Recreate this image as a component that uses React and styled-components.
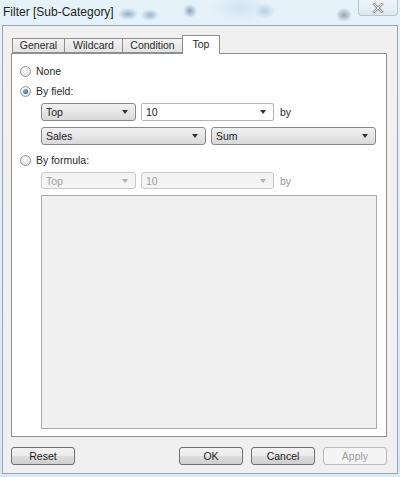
import styled, { createGlobalStyle } from "styled-components"

const Global = createGlobalStyle`
  html, body { margin: 0; padding: 0; }
  body {
    width: 400px;
    height: 477px;
    overflow: hidden;
    font-family: "Liberation Sans", Arial, sans-serif;
    color: #1e1e1e;
  }
`

const Frame = styled.div`
  width: 400px;
  height: 477px;
  box-sizing: border-box;
  display: flex;
  flex-direction: column;
  padding: 0 2px 3px 2px;
  background:
    radial-gradient(ellipse 10px 6px at 128px 14px, rgba(95,130,170,0.6), transparent),
    radial-gradient(ellipse 9px 6px at 150px 15px, rgba(95,130,170,0.55), transparent),
    radial-gradient(ellipse 7px 7px at 190px 11px, rgba(80,110,140,0.6), transparent),
    radial-gradient(ellipse 10px 8px at 265px 11px, rgba(140,175,205,0.5), transparent),
    radial-gradient(ellipse 8px 7px at 344px 15px, rgba(100,115,130,0.65), transparent),
    radial-gradient(ellipse 30px 14px at 240px 8px, rgba(190,215,232,0.5), transparent),
    linear-gradient(#e6f2f9, #d8e9f4);
`

const TitleBar = styled.div`
  height: 25px;
  display: flex;
  align-items: flex-start;
  justify-content: space-between;
  padding-left: 1px;
`

const Title = styled.div`
  font-size: 12px;
  line-height: 24px;
  color: #222;
`

const CloseButton = styled.div`
  width: 40px;
  height: 16px;
  box-sizing: border-box;
  border: 1px solid #b9c6d2;
  border-top: none;
  border-radius: 0 0 4px 4px;
  background: linear-gradient(#eef5fa, #dce9f2);
  display: flex;
  align-items: center;
  justify-content: center;
`

const Body = styled.div`
  flex: 1;
  display: flex;
  flex-direction: column;
  background: #f0f0f0;
  border: 1px solid #98a6b3;
  padding: 9px 9px 8px 8px;
`

const TabStrip = styled.div`
  display: flex;
  align-items: flex-end;
  padding-left: 1px;
  height: 18px;
  position: relative;
  z-index: 1;
`

const Tab = styled.div`
  width: ${p => p.$w}px;
  box-sizing: border-box;
  height: ${p => (p.$active ? 19 : 15)}px;
  margin-bottom: ${p => (p.$active ? -1 : 0)}px;
  margin-left: ${p => (p.$first ? 0 : -1)}px;
  border: 1px solid #8e8f8f;
  border-bottom: ${p => (p.$active ? "none" : "1px solid #8e8f8f")};
  background: ${p => (p.$active ? "#fff" : "linear-gradient(#f3f3f3, #e3e3e3)")};
  font-size: 10.5px;
  line-height: ${p => (p.$active ? 16 : 13)}px;
  text-align: center;
  color: #2a2a2a;
`

const Panel = styled.div`
  flex: 1;
  width: 376px;
  box-sizing: border-box;
  background: #fff;
  border: 1px solid #8e8f8f;
  display: flex;
  flex-direction: column;
  padding: 9px 0 7px 8px;
`

const RadioRow = styled.div`
  height: 16px;
  display: flex;
  align-items: center;
  gap: 5px;
  margin-top: ${p => p.$mt || 0}px;
  font-size: 10.5px;
  color: #2a2a2a;
`

const Radio = styled.span`
  width: 11px;
  height: 11px;
  box-sizing: border-box;
  border-radius: 50%;
  border: 1px solid #9a9a9a;
  background: radial-gradient(circle at 40% 35%, #ffffff, #d6d6d6);
  display: flex;
  align-items: center;
  justify-content: center;
  &::after {
    content: "";
    display: ${p => (p.$checked ? "block" : "none")};
    width: 5px;
    height: 5px;
    border-radius: 50%;
    background: radial-gradient(circle at 35% 35%, #8fb4d8, #1e4a78);
  }
`

const FieldRow = styled.div`
  display: flex;
  align-items: center;
  gap: 5px;
  margin-left: 21px;
  margin-top: ${p => p.$mt || 0}px;
  height: ${p => p.$h || 18}px;
`

const Select = styled.div`
  width: ${p => p.$w}px;
  height: 100%;
  box-sizing: border-box;
  border: 1px solid ${p => (p.$disabled ? "#c9c9c9" : p.$edit ? "#b4b4b4" : "#8a8a8a")};
  border-radius: ${p => (p.$edit ? 2 : 3)}px;
  background: ${p =>
    p.$disabled ? "#f4f4f4" : p.$edit ? "#fff" : "linear-gradient(#f0f0f0 0%, #e6e6e6 50%, #d8d8d8 100%)"};
  display: flex;
  align-items: center;
  justify-content: space-between;
  padding: 0 7px 0 4px;
  font-size: 10.5px;
  color: ${p => (p.$disabled ? "#a0a0a0" : "#222")};
  &::after {
    content: "";
    border-left: 3.5px solid transparent;
    border-right: 3.5px solid transparent;
    border-top: 4px solid ${p => (p.$disabled ? "#b0b0b0" : "#333")};
  }
`

const By = styled.span`
  font-size: 10.5px;
  color: ${p => (p.$disabled ? "#9a9a9a" : "#2a2a2a")};
  margin-left: 1px;
`

const TextBox = styled.div`
  width: 336px;
  flex: 1;
  margin-left: 21px;
  margin-top: 6px;
  box-sizing: border-box;
  border: 1px solid #a9a9a9;
  background: #f0f0f0;
`

const Footer = styled.div`
  display: flex;
  justify-content: space-between;
  margin-top: 10px;
  width: 376px;
`

const ButtonGroup = styled.div`
  display: flex;
  gap: 8px;
`

const Button = styled.div`
  width: 64px;
  height: 18px;
  box-sizing: border-box;
  border: 1px solid ${p => (p.$disabled ? "#bcbcbc" : "#707070")};
  border-radius: 3px;
  background: ${p => (p.$disabled ? "#f4f4f4" : "linear-gradient(#f2f2f2 0%, #ebebeb 50%, #dddddd 51%, #cfcfcf 100%)")};
  font-size: 10.5px;
  line-height: 16px;
  text-align: center;
  color: ${p => (p.$disabled ? "#a0a0a0" : "#222")};
`

const tabs = [
  { label: "General", w: 53 },
  { label: "Wildcard", w: 59 },
  { label: "Condition", w: 61 },
  { label: "Top", w: 38, active: true },
]

export default function App() {
  return (
    <>
      <Global />
      <Frame>
        <TitleBar>
          <Title>Filter [Sub-Category]</Title>
          <CloseButton>
            <svg width="12" height="10" viewBox="0 0 12 10">
              <path d="M2 1 L10 9 M10 1 L2 9" stroke="#9a9a9a" strokeWidth="2.6" strokeLinecap="square" />
              <path d="M2 1 L10 9 M10 1 L2 9" stroke="#f4f4f4" strokeWidth="1" strokeLinecap="square" />
            </svg>
          </CloseButton>
        </TitleBar>
        <Body>
          <TabStrip>
            {tabs.map((t, i) => (
              <Tab key={t.label} $w={t.w} $active={t.active} $first={i === 0}>
                {t.label}
              </Tab>
            ))}
          </TabStrip>
          <Panel>
            <RadioRow>
              <Radio />
              None
            </RadioRow>
            <RadioRow $mt={4}>
              <Radio $checked />
              By field:
            </RadioRow>
            <FieldRow $mt={4}>
              <Select $w={95}>Top</Select>
              <Select $w={133} $edit>10</Select>
              <By>by</By>
            </FieldRow>
            <FieldRow $mt={6}>
              <Select $w={165}>Sales</Select>
              <Select $w={165}>Sum</Select>
            </FieldRow>
            <RadioRow $mt={7}>
              <Radio />
              By formula:
            </RadioRow>
            <FieldRow $mt={4} $h={17}>
              <Select $w={95} $disabled>Top</Select>
              <Select $w={133} $disabled>10</Select>
              <By $disabled>by</By>
            </FieldRow>
            <TextBox />
          </Panel>
          <Footer>
            <Button>Reset</Button>
            <ButtonGroup>
              <Button>OK</Button>
              <Button>Cancel</Button>
              <Button $disabled>Apply</Button>
            </ButtonGroup>
          </Footer>
        </Body>
      </Frame>
    </>
  )
}
